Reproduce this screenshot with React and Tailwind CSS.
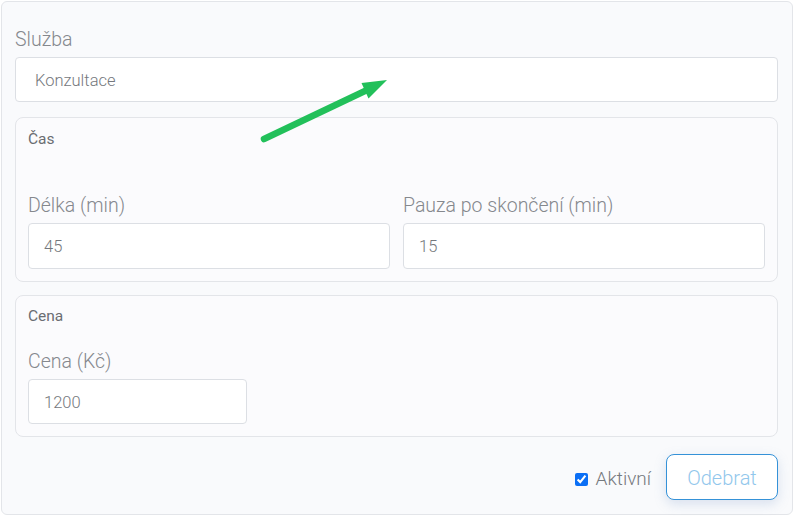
import React from "react";

const font = { fontFamily: "Roboto, 'Noto Sans', sans-serif" };

function Label({ children, className = "" }) {
  return (
    <div className={"text-[19.5px] leading-[28px] font-light text-[#85888d] pt-[2px] mb-[3px] " + className}>
      {children}
    </div>
  );
}

function Field({ value, h = "h-[45px]", pl = "pl-[19px]", className = "" }) {
  return (
    <div
      className={
        "flex items-center rounded border border-[#dcdfe4] bg-white pt-[3px] text-[16.5px] font-light text-[#75787d] " +
        h +
        " " +
        pl +
        " " +
        className
      }
    >
      {value}
    </div>
  );
}

export default function App() {
  return (
    <div className="w-[794px] h-[517px] bg-white p-px" style={font}>
      <div className="relative w-[792px] h-[514px] rounded-md border border-[#e3e5e9] bg-[#f9fafc] pl-[13px] pr-[14px] pt-[22px]">
        <Label>Služba</Label>
        <Field value="Konzultace" />

        <div className="mt-[15px] rounded-lg border border-[#e3e5e9] bg-[#fbfbfd] px-[12px] pt-[10px] pb-[12px]">
          <div className="text-[15.5px] leading-[22px] text-[#6a6d72]">Čas</div>
          <div className="mt-[40px] grid grid-cols-2 gap-[13px]">
            <div>
              <Label>Délka (min)</Label>
              <Field value="45" h="h-[46px]" pl="pl-[15px]" />
            </div>
            <div>
              <Label>Pauza po skončení (min)</Label>
              <Field value="15" h="h-[46px]" pl="pl-[15px]" />
            </div>
          </div>
        </div>

        <div className="mt-[13px] rounded-lg border border-[#e3e5e9] bg-[#fbfbfd] px-[12px] pt-[9px] pb-[12px]">
          <div className="text-[15.5px] leading-[22px] text-[#6a6d72]">Cena</div>
          <div className="mt-[19px]">
            <Label className="mb-[2px]">Cena (Kč)</Label>
            <Field value="1200" pl="pl-[15px]" className="w-[219px]" />
          </div>
        </div>

        <div className="mt-[17px] flex items-center justify-end">
          <input
            type="checkbox"
            checked
            readOnly
            className="mt-[4px] w-[13px] h-[13px] accent-[#0b6ff5] m-0"
          />
          <span className="ml-[8px] pt-[4px] text-[19px] font-light text-[#76797e]">Aktivní</span>
          <button className="ml-[15px] w-[112px] h-[46px] rounded-lg border border-[#3592d8] bg-white pt-[1px] text-[20px] font-light text-[#92c7ec] shadow-[0_4px_12px_rgba(120,150,200,0.25)]">
            Odebrat
          </button>
        </div>

        <svg
          className="absolute left-[248px] top-[68px]"
          width="150"
          height="80"
          viewBox="0 0 150 80"
        >
          <line x1="14" y1="69" x2="116" y2="20.5" stroke="#22c05a" strokeWidth="6.5" strokeLinecap="round" />
          <polygon points="137,10 111.5,13 118.5,28.5" fill="#22c05a" />
        </svg>
      </div>
    </div>
  );
}
